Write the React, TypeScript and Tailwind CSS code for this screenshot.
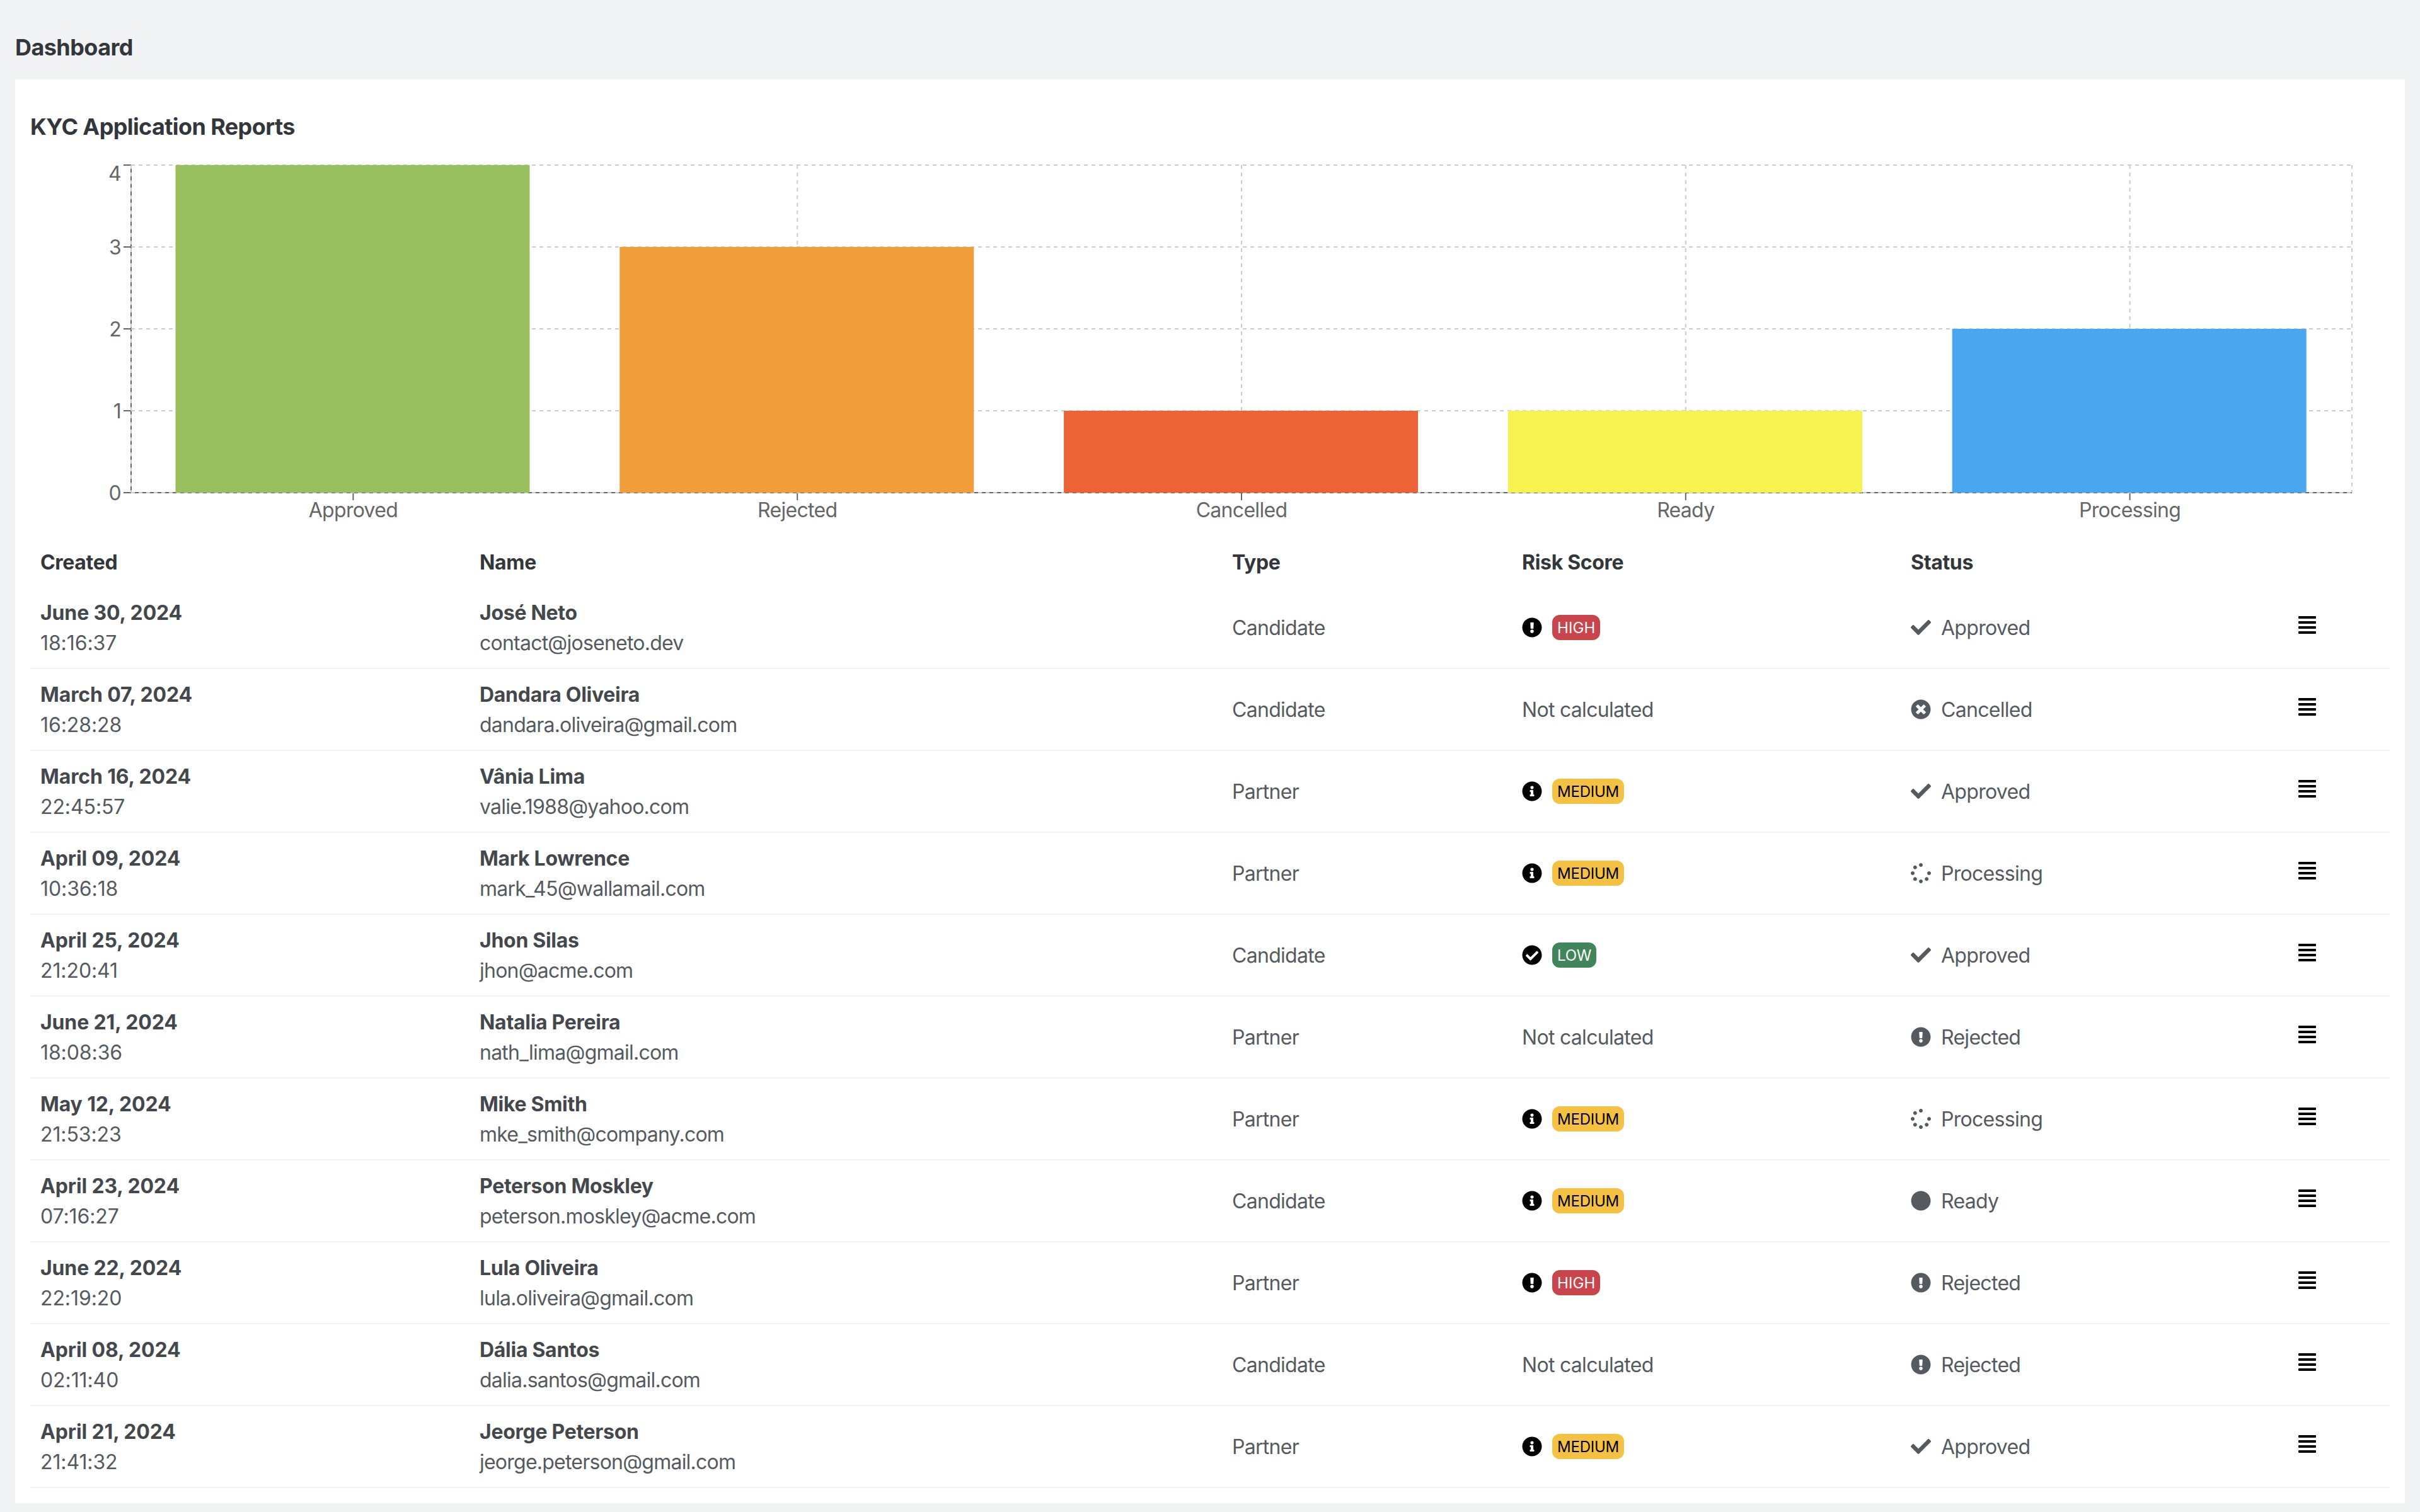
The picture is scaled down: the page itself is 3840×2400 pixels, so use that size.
import {
  FaAlignJustify,
  FaCheck,
  FaCheckCircle,
  FaCircle,
  FaExclamationCircle,
  FaInfoCircle,
  FaSpinner,
  FaTimesCircle,
} from 'react-icons/fa'
import clsx from 'clsx'

type Risk = 'HIGH' | 'MEDIUM' | 'LOW' | null
type Status = 'Approved' | 'Rejected' | 'Cancelled' | 'Ready' | 'Processing'

const rows: { date: string; time: string; name: string; email: string; type: string; risk: Risk; status: Status }[] = [
  { date: 'June 30, 2024',  time: '18:16:37', name: 'José Neto',        email: 'contact@joseneto.dev',       type: 'Candidate', risk: 'HIGH',   status: 'Approved' },
  { date: 'March 07, 2024', time: '16:28:28', name: 'Dandara Oliveira', email: 'dandara.oliveira@gmail.com', type: 'Candidate', risk: null,     status: 'Cancelled' },
  { date: 'March 16, 2024', time: '22:45:57', name: 'Vânia Lima',       email: 'valie.1988@yahoo.com',       type: 'Partner',   risk: 'MEDIUM', status: 'Approved' },
  { date: 'April 09, 2024', time: '10:36:18', name: 'Mark Lowrence',    email: 'mark_45@wallamail.com',      type: 'Partner',   risk: 'MEDIUM', status: 'Processing' },
  { date: 'April 25, 2024', time: '21:20:41', name: 'Jhon Silas',       email: 'jhon@acme.com',              type: 'Candidate', risk: 'LOW',    status: 'Approved' },
  { date: 'June 21, 2024',  time: '18:08:36', name: 'Natalia Pereira',  email: 'nath_lima@gmail.com',        type: 'Partner',   risk: null,     status: 'Rejected' },
  { date: 'May 12, 2024',   time: '21:53:23', name: 'Mike Smith',       email: 'mke_smith@company.com',      type: 'Partner',   risk: 'MEDIUM', status: 'Processing' },
  { date: 'April 23, 2024', time: '07:16:27', name: 'Peterson Moskley', email: 'peterson.moskley@acme.com',  type: 'Candidate', risk: 'MEDIUM', status: 'Ready' },
  { date: 'June 22, 2024',  time: '22:19:20', name: 'Lula Oliveira',    email: 'lula.oliveira@gmail.com',    type: 'Partner',   risk: 'HIGH',   status: 'Rejected' },
  { date: 'April 08, 2024', time: '02:11:40', name: 'Dália Santos',     email: 'dalia.santos@gmail.com',     type: 'Candidate', risk: null,     status: 'Rejected' },
  { date: 'April 21, 2024', time: '21:41:32', name: 'Jeorge Peterson',  email: 'jeorge.peterson@gmail.com',  type: 'Partner',   risk: 'MEDIUM', status: 'Approved' },
]

const chartData = [
  { label: 'Approved',   value: 4, color: '#98c05e' },
  { label: 'Rejected',   value: 3, color: '#f19d3a' },
  { label: 'Cancelled',  value: 1, color: '#ec6337' },
  { label: 'Ready',      value: 1, color: '#f6f250' },
  { label: 'Processing', value: 2, color: '#4aa6ee' },
]

const statusIcons = {
  Approved: FaCheck,
  Rejected: FaExclamationCircle,
  Cancelled: FaTimesCircle,
  Ready: FaCircle,
  Processing: FaSpinner,
}

const riskIcons = {
  HIGH: FaExclamationCircle,
  MEDIUM: FaInfoCircle,
  LOW: FaCheckCircle,
}

const riskStyles = {
  HIGH: 'bg-[#ca444b] text-white tracking-[0.003em]',
  MEDIUM: 'bg-[#f4c143] text-black tracking-[-0.01em]',
  LOW: 'bg-[#41865a] text-white tracking-[-0.01em]',
}

const grid = 'grid grid-cols-[697px_1194px_460px_617px_600px_1fr] px-4'

// Plot area inside the 3744x612 svg
const LEFT = 160
const RIGHT = 3684
const TOP = 22
const BOTTOM = 542
const STEP = 130
const BAND = (RIGHT - LEFT) / chartData.length

function ReportChart() {
  return (
    <svg className="block" width={3744} height={612} viewBox="0 0 3744 612">
      <g stroke="#666" strokeWidth={2}>
        <line x1={LEFT} x2={RIGHT} y1={BOTTOM} y2={BOTTOM} />
        <line x1={LEFT} x2={LEFT} y1={TOP} y2={BOTTOM} />
        {[0, 1, 2, 3, 4].map(n => (
          <line key={n} x1={LEFT - 12} x2={LEFT} y1={BOTTOM - n * STEP} y2={BOTTOM - n * STEP} />
        ))}
        {chartData.map((d, i) => (
          <line key={d.label} x1={LEFT + BAND * (i + 0.5)} x2={LEFT + BAND * (i + 0.5)} y1={BOTTOM} y2={BOTTOM + 12} />
        ))}
      </g>

      {/* Dashed grid sits over the solid axes */}
      <g stroke="#ccc" strokeWidth={2} strokeDasharray="6 6">
        {[0, 1, 2, 3, 4].map(n => (
          <line key={n} x1={LEFT} x2={RIGHT} y1={BOTTOM - n * STEP} y2={BOTTOM - n * STEP} />
        ))}
        {chartData.map((d, i) => (
          <line key={d.label} x1={LEFT + BAND * (i + 0.5)} x2={LEFT + BAND * (i + 0.5)} y1={TOP} y2={BOTTOM} />
        ))}
        <line x1={LEFT} x2={LEFT} y1={TOP} y2={BOTTOM} />
        <line x1={RIGHT} x2={RIGHT} y1={TOP} y2={BOTTOM} />
      </g>

      {chartData.map((d, i) => (
        <rect
          key={d.label}
          x={LEFT + BAND * (i + 0.1)}
          y={BOTTOM - d.value * STEP}
          width={562}
          height={d.value * STEP}
          fill={d.color}
        />
      ))}

      <g fill="#666" className="text-[32px] tracking-[-0.022em]">
        {[0, 1, 2, 3, 4].map(n => (
          <text key={n} x={LEFT - 16} y={n === 4 ? TOP + 25 : BOTTOM - n * STEP + 12} textAnchor="end">
            {n}
          </text>
        ))}
        {chartData.map((d, i) => (
          <text key={d.label} x={LEFT + BAND * (i + 0.5)} y={BOTTOM + 39} textAnchor="middle">
            {d.label}
          </text>
        ))}
      </g>
    </svg>
  )
}

function RiskScore({ risk }: { risk: Risk }) {
  if (!risk) return <span className="pt-0.5">Not calculated</span>
  const Icon = riskIcons[risk]
  return (
    <div className="flex items-center gap-4">
      <Icon size={32} className="text-black" />
      <span className={clsx('h-10 px-2 rounded-xl text-2xl leading-[41px]', riskStyles[risk])}>{risk}</span>
    </div>
  )
}

export default function App() {
  return (
    <div className="w-[3840px] h-[2400px] overflow-hidden bg-[#f2f3f5] px-6 font-['Inter',sans-serif] text-[32px] leading-[48px] tracking-[-0.022em] text-[#555a60]">
      <h1 className="h-[126px] pt-12 text-4xl leading-[54px] font-bold tracking-[-0.016em] text-[#33363b]">
        Dashboard
      </h1>

      <main className="h-[2260px] bg-white px-6 pt-12">
        <h2 className="h-[66px] text-4xl leading-[54px] font-bold tracking-[-0.017em] text-[#33363b]">
          KYC Application Reports
        </h2>

        <ReportChart />

        <div className={clsx(grid, 'h-20 items-center pt-0.5 font-bold tracking-[-0.01em] text-[#33363b]')}>
          <span>Created</span>
          <span>Name</span>
          <span>Type</span>
          <span>Risk Score</span>
          <span>Status</span>
        </div>

        {rows.map(row => {
          const StatusIcon = statusIcons[row.status]
          return (
            <div key={row.email} className={clsx(grid, 'h-[130px] items-center border-b-2 border-[#f2f3f5]')}>
              <div className="pt-0.5">
                <p className="font-bold tracking-[-0.004em] text-[#44484c]">{row.date}</p>
                <p className="tracking-[-0.003em]">{row.time}</p>
              </div>
              <div className="pt-0.5">
                <p className="font-bold tracking-[-0.009em] text-[#44484c]">{row.name}</p>
                <p className="tracking-[-0.024em]">{row.email}</p>
              </div>
              <span className="pt-0.5">{row.type}</span>
              <RiskScore risk={row.risk} />
              <div className="flex items-center gap-4">
                <StatusIcon size={32} />
                <span className="pt-0.5">{row.status}</span>
              </div>
              <button className="justify-self-start mb-2 ml-[13px] text-black">
                <FaAlignJustify size={32} />
              </button>
            </div>
          )
        })}
      </main>
    </div>
  )
}
